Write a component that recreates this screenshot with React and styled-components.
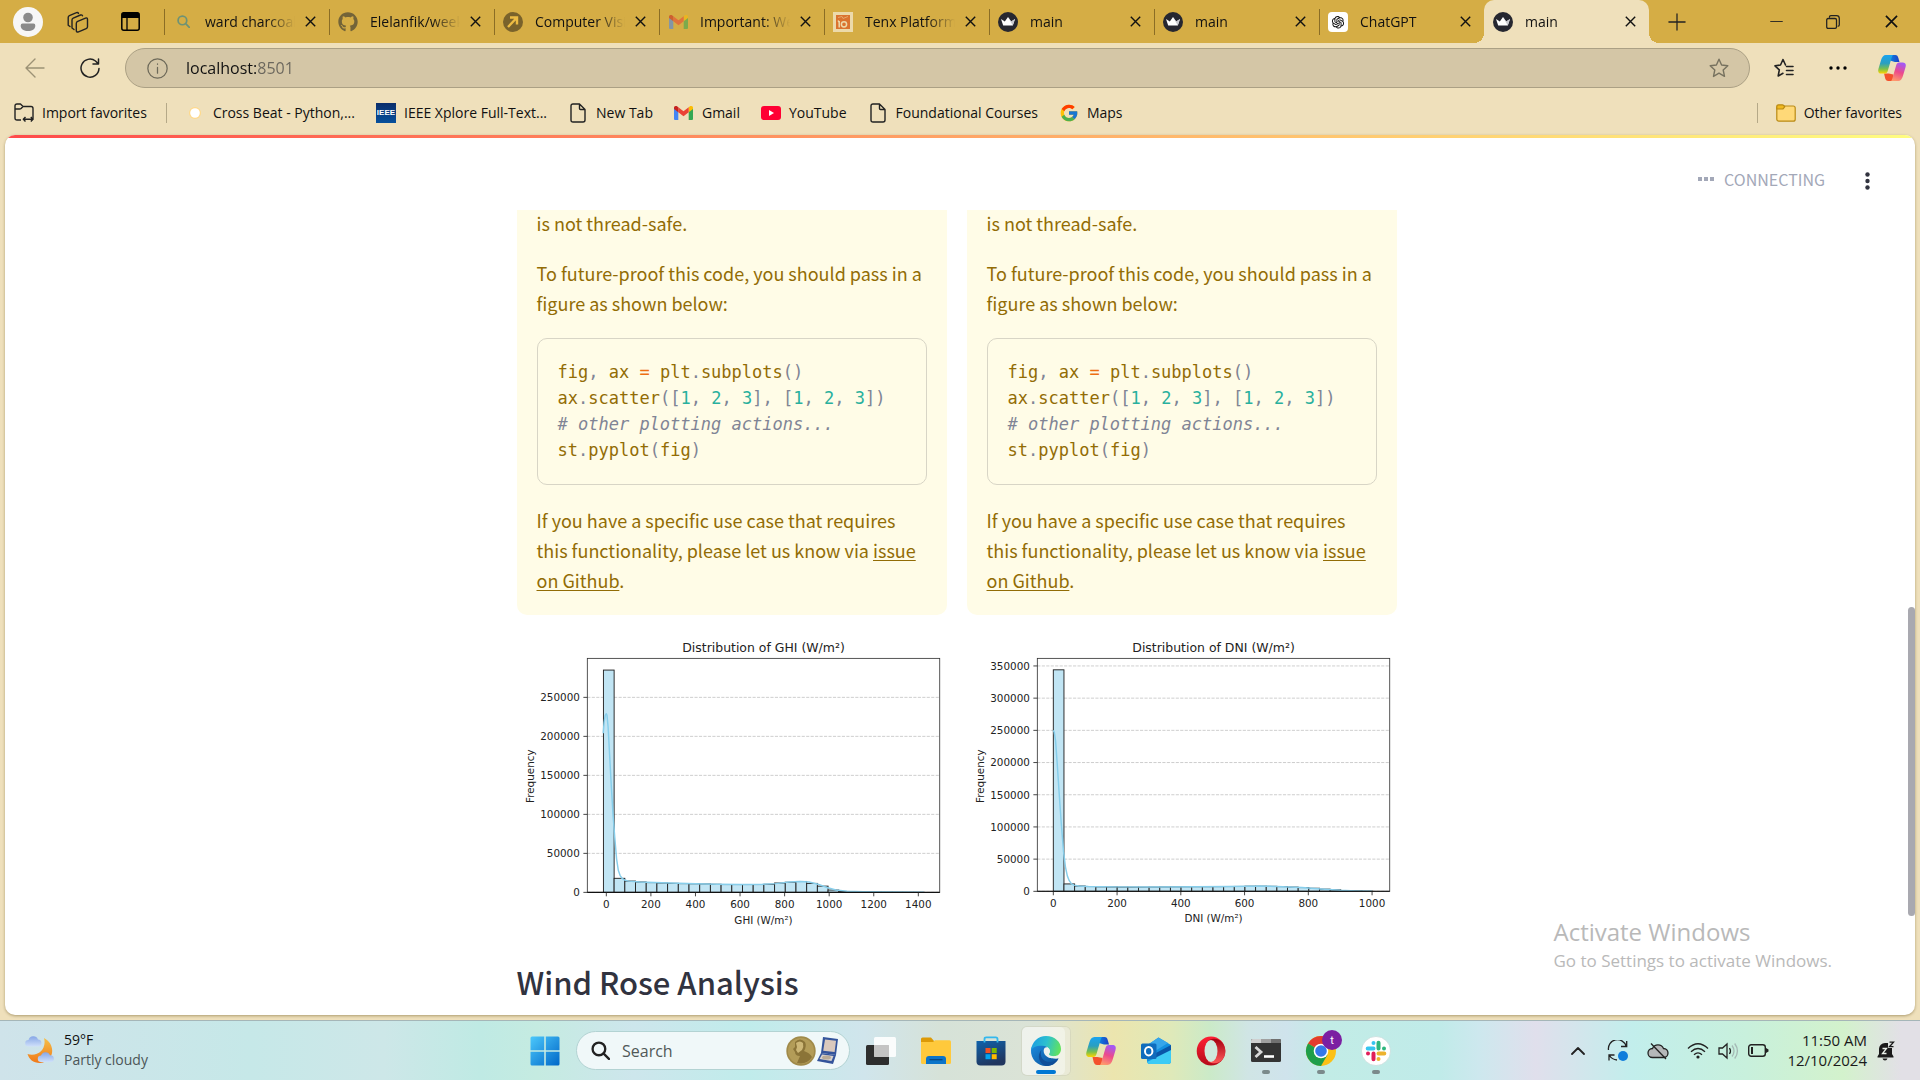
import React from "react";
import styled, { createGlobalStyle, css } from "styled-components";
import { FaGithub } from "react-icons/fa";
import { FcGoogle } from "react-icons/fc";
import { AiOutlineOpenAI } from "react-icons/ai";

const GlobalStyle = createGlobalStyle`
  *, *::before, *::after { box-sizing: border-box; }
  body { margin: 0; overflow: hidden; }
  button, input { font: inherit; color: inherit; margin: 0; padding: 0; border: 0; background: none; outline: none; }
  svg { display: block; flex: none; }
`;

const uiFont = `"Open Sans", "Noto Sans", sans-serif`;
const docFont = `"Noto Sans CJK SC", "Noto Sans", sans-serif`;

/* ---------- window shell ---------- */

const Desktop = styled.div`
  display: flex;
  flex-direction: column;
  height: 100vh;
  background: #efe0bb;
  color: #111;
  font: 14px/20px ${uiFont};
`;

const IconButton = styled.button`
  display: flex;
  align-items: center;
  justify-content: center;
  flex: none;
  width: ${(p) => p.$w || 40}px;
  height: ${(p) => p.$h || 40}px;
`;

/* ---------- tab strip ---------- */

const TabStrip = styled.div`
  display: flex;
  align-items: center;
  height: 43px;
  flex: none;
  background: #d5ad45;
`;

const StripTools = styled.div`
  display: flex;
  align-items: center;
  width: 164px;
  flex: none;
  padding-left: 2px;
`;

const Tab = styled.div`
  position: relative;
  display: flex;
  align-items: center;
  flex: 0 1 165px;
  min-width: 0;
  height: 43px;
  padding: 0 8px 0 9px;
  ${(p) =>
    p.$active
      ? css`
          background: #efe0bb;
          border-radius: 10px 10px 0 0;
          &::before,
          &::after {
            content: "";
            position: absolute;
            bottom: 0;
            width: 10px;
            height: 10px;
          }
          &::before {
            right: 100%;
            background: radial-gradient(circle at 0 0, #d5ad45 10px, #efe0bb 10px);
          }
          &::after {
            left: 100%;
            background: radial-gradient(circle at 100% 0, #d5ad45 10px, #efe0bb 10px);
          }
        `
      : css`
          &::before {
            content: "";
            position: absolute;
            left: 0;
            top: 9px;
            width: 1px;
            height: 26px;
            background: #8b6d25;
          }
        `}
`;

const TabLink = styled.button`
  display: flex;
  align-items: center;
  gap: 12px;
  flex: 1;
  min-width: 0;
  height: 32px;
  text-align: left;
`;

const TabTitle = styled.span`
  flex: 1;
  min-width: 0;
  overflow: hidden;
  white-space: nowrap;
  margin-right: 4px;
  mask-image: linear-gradient(to right, #000 calc(100% - 28px), transparent);
`;

const Favicon = styled.span`
  display: flex;
  align-items: center;
  justify-content: center;
  flex: none;
  width: 20px;
  height: 20px;
  opacity: ${(p) => (p.$asleep ? 0.55 : 1)};
`;

const GptTile = styled.span`
  display: flex;
  padding: 2px;
  border-radius: 4px;
  background: #fff;
`;

const Spacer = styled.div`
  flex: 1;
`;

/* ---------- address bar ---------- */

const Toolbar = styled.div`
  display: flex;
  align-items: center;
  height: 48px;
  flex: none;
  padding: 2px 8px 0 8px;
`;

const AddressBar = styled.label`
  display: flex;
  align-items: center;
  flex: 1;
  height: 40px;
  margin: 0 14px 0 7px;
  padding: 0 10px 0 21px;
  border: 1px solid #aba084;
  border-radius: 20px;
  background: #d4c6a6;
`;

const AddressInput = styled.input`
  flex: 1;
  min-width: 0;
  margin-left: 18px;
  font-size: 16px;
  line-height: 24px;
  color: #555;
  -webkit-text-fill-color: transparent;
  background: linear-gradient(to right, #111 70px, #6a665c 70px);
  background-clip: text;
  -webkit-background-clip: text;
`;

/* ---------- favorites bar ---------- */

const FavoritesBar = styled.nav`
  display: flex;
  align-items: center;
  gap: 21px;
  height: 44px;
  flex: none;
  padding: 0 18px 0 14px;
`;

const Favorite = styled.a`
  display: flex;
  align-items: center;
  gap: 8px;
  color: #111;
  text-decoration: none;
  white-space: nowrap;
`;

const Divider = styled.span`
  width: 1px;
  height: 20px;
  margin: 0 -3px 0 -2px;
  background: #b5a988;
`;

/* ---------- page ---------- */

const PageFrame = styled.div`
  position: relative;
  display: flex;
  flex-direction: column;
  flex: 1;
  min-height: 0;
  margin: 0 5px 5px;
  border-radius: 10px;
  overflow: hidden;
  background: #fff;
  color: #31333f;
  font-family: ${docFont};
  box-shadow: 0 1px 3px rgba(90, 70, 20, 0.45);
`;

const Decoration = styled.div`
  height: 3px;
  flex: none;
  background: linear-gradient(to right, #ff4b4b, #fffd80);
`;

const PageHeader = styled.header`
  display: flex;
  align-items: center;
  justify-content: flex-end;
  height: 72px;
  flex: none;
  padding: 13px 28px 0 0;
`;

const Status = styled.span`
  display: flex;
  align-items: center;
  gap: 10px;
  margin-right: 22px;
  padding-bottom: 4px;
  color: #a3a8b8;
  font-size: 16px;
  line-height: 24px;
`;

const Main = styled.main`
  flex: 1;
  min-height: 0;
  padding-right: 7px;
  overflow: hidden;
`;

const Block = styled.div`
  width: 880px;
  max-width: 100%;
  margin: 0 auto;
`;

const Columns = styled.div`
  display: grid;
  grid-template-columns: 1fr 1fr;
  gap: 20px;
`;

const Column = styled.section`
  display: flex;
  flex-direction: column;
  gap: 20px;
  min-width: 0;
`;

const Alert = styled.div`
  display: flex;
  flex-direction: column;
  gap: 20px;
  margin-top: -2px;
  padding: 0 20px 20px;
  border-radius: 0 0 10px 10px;
  background: #fffce7;
  color: #926c05;
  font-size: 18px;
  line-height: 30px;
`;

const Paragraph = styled.p`
  margin: 0;
  a {
    color: inherit;
    text-underline-offset: 2px;
  }
`;

const CodeBlock = styled.pre`
  margin: 0;
  padding: 20px;
  height: 147px;
  border: 1px solid #d8d5c6;
  border-radius: 10px;
  font: 17px/26px "DejaVu Sans Mono", "Liberation Mono", monospace;
`;

const Token = styled.span`
  color: ${(p) => ({ op: "#ed6f13", num: "#29b09d", mark: "#808495", note: "#808495" })[p.$kind]};
  font-style: ${(p) => (p.$kind === "note" ? "italic" : "normal")};
`;

const Heading = styled.h2`
  margin: 31px 0 0;
  font-size: 31px;
  line-height: 42px;
  font-weight: 500;
`;

const ScrollThumb = styled.div`
  position: absolute;
  right: 0;
  top: 472px;
  width: 7px;
  height: 309px;
  border-radius: 4px;
  background: #a9a9b0;
`;

const Watermark = styled.div`
  position: absolute;
  right: 83px;
  bottom: 41px;
  color: #b9b9b9;
  font-family: ${uiFont};
  font-weight: 400;
`;

const WatermarkTitle = styled.div`
  font-size: 24px;
  line-height: 32px;
`;

const WatermarkText = styled.div`
  font-size: 17px;
  line-height: 26px;
`;

/* ---------- taskbar ---------- */

const TaskBar = styled.footer`
  display: grid;
  grid-template-columns: 1fr auto 1fr;
  align-items: center;
  height: 60px;
  flex: none;
  border-top: 1px solid #a5b6b8;
  background: linear-gradient(
    to right, #cfe3ea 0%, #c6e8e8 13%, #cde7e8 20%, #bfeae4 25%, #c5ebe1 28%, #cde6ec 33%, #c0eceb 39%,
    #d0e5ec 45%, #d6e2d8 49%, #dbe3d6 54%, #ece5ae 58%, #dfe9b9 61%, #cbeac8 63%, #d0e5e5 65%,
    #cfe3ec 67%, #c2ece6 69%, #c0ebe9 75%, #cde8ee 77%, #e0dfec 80%, #c2eeec 85%, #c8f0dc 91%,
    #d3f2cc 96%, #e2e0e6 99%
  );
`;

const Weather = styled.button`
  display: flex;
  align-items: center;
  gap: 9px;
  justify-self: start;
  padding: 0 0 2px 25px;
  text-align: left;
`;

const Muted = styled.div`
  color: #4c5658;
`;

const Apps = styled.div`
  display: flex;
  align-items: center;
`;

const AppButton = styled.button`
  position: relative;
  display: flex;
  align-items: center;
  justify-content: center;
  width: 55px;
  height: 58px;
  &::before {
    content: "";
    position: absolute;
    inset: 5px 3px 5px 4px;
    border-radius: 5px;
    background: ${(p) => (p.$active ? "rgba(255,255,255,.55)" : "none")};
    box-shadow: ${(p) => (p.$active ? "0 0 0 1px rgba(200,200,180,.4), inset -5px 0 0 rgba(225,225,200,.5)" : "none")};
  }
  &::after {
    content: "";
    position: absolute;
    bottom: 6px;
    width: ${(p) => (p.$active ? 20 : 8)}px;
    height: 4px;
    border-radius: 2px;
    background: ${(p) => (p.$active ? "#0078d4" : p.$running ? "#7b8a8b" : "none")};
  }
  svg {
    position: relative;
    overflow: visible;
  }
`;

const SearchBox = styled.label`
  display: flex;
  align-items: center;
  width: 274px;
  height: 39px;
  margin: 0 3px 0 4px;
  padding: 0 11px 0 14px;
  border: 1px solid #b3d3d3;
  border-radius: 20px;
  background: #f0f8f9;
  input {
    flex: 1;
    min-width: 0;
    margin-left: 12px;
    font-size: 16px;
    line-height: 24px;
  }
  input::placeholder {
    color: #505858;
    opacity: 1;
  }
`;

const Tray = styled.div`
  display: flex;
  align-items: center;
  justify-self: end;
  padding-right: 25px;
`;

const Clock = styled.button`
  margin: 0 10px 0 3px;
  padding-bottom: 2px;
  width: 86px;
  text-align: right;
  white-space: nowrap;
  color: #1a1a1a;
  font-size: 15px;
`;

/* ---------- icons ---------- */

const Close = ({ size = 11 }) => (
  <svg width={size} height={size} viewBox="0 0 11 11" stroke="#111" strokeWidth="1.4">
    <path d="M.8.8l9.4 9.4M10.2.8L.8 10.2" />
  </svg>
);

const Avatar = () => (
  <svg width="30" height="30" viewBox="0 0 30 30">
    <circle cx="15" cy="15" r="15" fill="#f7f7f7" />
    <circle cx="15" cy="10.500" r="4.800" fill="#8b8b8b" />
    <path d="M9.500 16.500h11q1.800 0 1.800 2.200c0 3.600-3.300 5.300-7.300 5.300s-7.300-1.700-7.300-5.300q0-2.200 1.800-2.200z" fill="#8b8b8b" />
  </svg>
);

const Workspaces = () => (
  <svg width="22" height="22" viewBox="0 0 22 22" fill="none" stroke="#222" strokeWidth="1.4" strokeLinejoin="round" strokeLinecap="round">
    <path d="M3 15.500L1.200 14.200V6.500q0-1.300 1.200-1.800L9.500 1.600q1.400-.5 2 .8" />
    <path d="M7 18.500l-2-1.500V9q0-1.300 1.200-1.800L13.500 4q1.400-.5 2 .8" />
    <path d="M9.300 12.500q0-1.600 1.400-2.200l7.800-3.200q2-.7 2 1.400v7.300q0 1.400-1.300 1.900l-7.700 3.200q-2.200.7-2.200-1.500z" />
  </svg>
);

const TabActions = () => (
  <svg width="19" height="19" viewBox="0 0 19 19">
    <rect x=".8" y=".8" width="17.400" height="17.400" rx="2" fill="none" stroke="#000" strokeWidth="1.500" />
    <path d="M1 2q0-1.500 1.500-1.500h14q1.500 0 1.500 1.500v4H1z" />
    <path d="M6 6v12" stroke="#000" strokeWidth="1.300" />
  </svg>
);

const Crown = () => (
  <svg width="20" height="20" viewBox="0 0 20 20">
    <circle cx="10" cy="10" r="10" fill="#262730" />
    <path d="M3 7l3.800 2.500L10 5l3.200 4.500L17 7l-2.200 6.500H5.200z" fill="#fff" />
    <path d="M10 5l3.200 4.500L17 7l-2.200 6.500z" fill="#c9cad0" />
  </svg>
);

const Magnifier = ({ size, color, width }) => (
  <svg width={size} height={size} viewBox="0 0 18 18" fill="none" stroke={color} strokeWidth={width}>
    <circle cx="7.500" cy="7.500" r="6" />
    <path d="M12 12l5 5" strokeLinecap="round" />
  </svg>
);

const ArrowBadge = () => (
  <svg width="20" height="20" viewBox="0 0 20 20">
    <circle cx="10" cy="10" r="10" fill="#2f2616" />
    <path d="M5 15l8.500-9M7 5.500h7v7" fill="none" stroke="#ffc843" strokeWidth="2.400" />
  </svg>
);

const GmailMark = () => (
  <svg width="19" height="14" viewBox="0 0 19 14">
    <path d="M0 2.200V13q0 1 1 1h3.300V5.500z" fill="#4285f4" />
    <path d="M19 2.200V13q0 1-1 1h-3.300V5.500z" fill="#34a853" />
    <path d="M14.700 1.200v5L19 3V1.700C19 .2 17.200-.5 16 .3z" fill="#fbbc04" />
    <path d="M4.300 6.300V1.200l5.200 4 5.200-4v5.100l-5.200 4z" fill="#ea4335" />
    <path d="M0 1.700V3l4.300 3.200v-5L3 .3C1.800-.5 0 .2 0 1.700z" fill="#c5221f" />
  </svg>
);

const TenMark = () => (
  <svg width="20" height="20" viewBox="0 0 20 20">
    <path d="M0 0h20v20H0z" fill="#fff" />
    <path d="M3 3h14v14H3z" fill="#e1441e" />
    <path d="M6.200 9v6.500M4.800 9.500l1.400-.7" stroke="#fff" strokeWidth="1.500" />
    <circle cx="11" cy="12.300" r="2.600" fill="none" stroke="#fff" strokeWidth="1.500" />
    <path d="M5 5.500l4-1 1 2 5-2" stroke="#f2a58f" fill="none" />
  </svg>
);

const Stroke = ({ w = 20, h = 20, box = "0 0 20 20", color = "#222", sw = 1.4, d }) => (
  <svg width={w} height={h} viewBox={box} fill="none" stroke={color} strokeWidth={sw} strokeLinecap="round" strokeLinejoin="round">
    <path d={d} />
  </svg>
);

const starPath = "M10 1.200l2.600 5.800 6.200.7-4.600 4.300 1.300 6.400L10 15.200l-5.500 3.200 1.300-6.400L1.200 7.700l6.200-.7z";

const PageIcon = () => <Stroke w={16} h={20} box="0 0 16 20" d="M3 1h6.500L15 6.500V17q0 2-2 2H3q-2 0-2-2V3q0-2 2-2zM9.500 1v4.500q0 1 1 1H15" />;

const YouTube = () => (
  <svg width="20" height="14" viewBox="0 0 20 14">
    <rect width="20" height="14" rx="3" fill="#ff0033" />
    <path d="M8 4l5 3-5 3z" fill="#fff" />
  </svg>
);

const Folder = () => (
  <svg width="20" height="18" viewBox="0 0 20 18" stroke="#b98a14" strokeWidth="1.200">
    <rect x=".8" y="2" width="18.400" height="15.200" rx="2" fill="#ffd978" />
    <path d="M.8 5V2.500Q.8.800 2.500.8h4q1 0 2.300 2L7 5z" fill="#f0b91e" />
  </svg>
);

const ImportIcon = () => (
  <svg width="20" height="20" viewBox="0 0 20 20" fill="none" stroke="#222" strokeWidth="1.400" strokeLinejoin="round">
    <path d="M7 17H3q-2 0-2-2V3q0-2 2-2h3.500L9 3.500h8q2 0 2 2V15q0 1-.8 1.500M1 6h4.500q1 0 1.600-.6L9 3.500" />
    <path d="M11.500 14L9.300 16.300l2.200 2.300M16.800 14l2.200 2.300-2.200 2.300M10 16.300h8.500" />
  </svg>
);

const Ieee = styled.span`
  width: 20px;
  height: 20px;
  background: linear-gradient(#0a2d6b, #07509c);
  color: #fff;
  font: bold 8px/20px "Liberation Sans", sans-serif;
  text-align: center;
`;

const SunDot = () => (
  <svg width="20" height="20" viewBox="0 0 20 20">
    <circle cx="10" cy="10" r="6" fill="#ffd98a" />
    <circle cx="10" cy="10" r="4.800" fill="#fff" />
  </svg>
);

const Copilot = ({ size = 30, id }) => (
  <svg width={size} height={size} viewBox="0 0 30 28">
    <defs>
      <linearGradient id={`${id}a`} x1="0" y1="0" x2="0" y2="1">
        <stop offset="0" stopColor="#1aa3f0" />
        <stop offset=".45" stopColor="#2a9fc0" />
        <stop offset=".75" stopColor="#7cc04a" />
        <stop offset="1" stopColor="#ffd400" />
      </linearGradient>
      <linearGradient id={`${id}b`} x1=".6" y1="0" x2=".3" y2="1">
        <stop offset="0" stopColor="#a259f7" />
        <stop offset=".5" stopColor="#ec4a8b" />
        <stop offset="1" stopColor="#ff9a6b" />
      </linearGradient>
      <linearGradient id={`${id}c`} x1="0" y1="0" x2="1" y2="0">
        <stop offset="0" stopColor="#0d80e0" />
        <stop offset="1" stopColor="#1f3fc4" />
      </linearGradient>
    </defs>
    <path d="M13 0h5.500c2 0 2.700 1.200 3.300 3.200L23 7.500h-5L13 6z" fill={`url(#${id}c)`} />
    <path d="M17 28h-6c-2 0-2.800-1.200-3.400-3.200L6.500 20h5l5 1z" fill="#f4512c" />
    <path d="M16 0H8.500C5.800 0 4.300 2.200 3.300 5.500L.6 14.500C-.6 18.500 1 20 3.500 20h3.700c1.800 0 2.700-1 3.300-3L14 5c.7-2.600 1.300-4.200 2-5z" fill={`url(#${id}a)`} />
    <path d="M14 28h7.500c2.700 0 4.200-2.200 5.200-5.500l2.700-9c1.200-4-.4-5.500-2.900-5.500h-3.700c-1.800 0-2.700 1-3.300 3L16 23c-.7 2.600-1.300 4.200-2 5z" fill={`url(#${id}b)`} />
  </svg>
);

const WeatherIcon = () => (
  <svg width="30" height="30" viewBox="0 0 30 30">
    <defs>
      <linearGradient id="moon" x1="0" y1="0" x2="0" y2="1">
        <stop offset="0" stopColor="#f5c04a" />
        <stop offset="1" stopColor="#f07818" />
      </linearGradient>
      <linearGradient id="cloud" x1="0" y1="0" x2="0" y2="1">
        <stop offset="0" stopColor="#86a6e6" />
        <stop offset="1" stopColor="#cfe0fa" />
      </linearGradient>
    </defs>
    <path d="M19 3c12 6 11 24-4 25C8 28 4 24 2.500 19 13 22 22 14 19 3z" fill="url(#moon)" />
    <path d="M3.500 11.500a3.300 3.300 0 010-6.600A5 5 0 0113 4.500a3.600 3.600 0 011 7z" fill="url(#cloud)" />
    <path d="M16 27a3.200 3.200 0 010-6.400 4.800 4.800 0 019-.4 3.500 3.500 0 011.500 6.800z" fill="url(#cloud)" />
  </svg>
);

const StartIcon = () => (
  <svg width="30" height="30" viewBox="0 0 30 30">
    <defs>
      <linearGradient id="win" x1="0" y1="0" x2="1" y2="1">
        <stop offset="0" stopColor="#4cc8fb" />
        <stop offset="1" stopColor="#0067c8" />
      </linearGradient>
    </defs>
    <path d="M2 .5h12.200v13.700H.5V2Q.5.500 2 .5zM15.800.5H28q1.500 0 1.500 1.500v12.200H15.800zM.5 15.800h13.700v13.700H2q-1.500 0-1.500-1.500zM15.800 15.800h13.700V28q0 1.500-1.500 1.500H15.800z" fill="url(#win)" />
  </svg>
);

const Medal = () => (
  <svg width="52" height="30" viewBox="0 0 52 30">
    <circle cx="15" cy="15" r="14.700" fill="#a08a4a" />
    <circle cx="15" cy="15" r="13" fill="#b39c58" />
    <path d="M9 6q5-5 10 0 2 4-1 9 6 2 8 6-5 8-15 6l3-7q-5 0-5-4l-2-3 2-2z" fill="#8b7438" />
    <path d="M10 7q4-3 7 0 1 4-1 7l-4 3-2-3 1-3z" fill="#cdb777" />
    <path d="M37 1l15 2-2 16-15-2z" fill="#34549b" />
    <path d="M39 3.500l11 1.300-1.400 11.200-11.400-1.300z" fill="#dac9bd" />
    <path d="M35 17l15 2-3 9-16-3z" fill="#34549b" />
    <path d="M36 18.500l11.500 1.500-2 5-12-2z" fill="#d9d3ce" />
    <ellipse cx="40.500" cy="21.500" rx="4.500" ry="2" fill="#b9ab98" />
  </svg>
);

const TaskView = () => (
  <svg width="30" height="28" viewBox="0 0 30 28">
    <rect y="8" width="23" height="20" rx="1.500" fill="#2e2e2e" />
    <rect x="8" y="0" width="22" height="20" rx="1.500" fill="#fff" opacity=".88" />
    <path d="M8 8h15v12H8z" fill="#bcbcbc" opacity=".8" />
  </svg>
);

const Explorer = () => (
  <svg width="30" height="27" viewBox="0 0 30 27">
    <path d="M0 2Q0 .5 1.500.5h8.500l3 3.500H28v5H0z" fill="#dd9a07" />
    <path d="M0 5h12l2-1.700h14.500Q30 3.300 30 5v20.500q0 1.500-1.500 1.500h-27Q0 27 0 25.500z" fill="#ffc93c" />
    <path d="M5 27v-5q0-3 3-3h14q3 0 3 3v5z" fill="#0b74c9" />
    <path d="M8.500 22.700h13" stroke="#07437c" strokeWidth="1.200" />
  </svg>
);

const Store = () => (
  <svg width="30" height="30" viewBox="0 0 30 30">
    <defs>
      <linearGradient id="store" x1="0" y1="0" x2=".4" y2="1">
        <stop offset="0" stopColor="#0f62ab" />
        <stop offset="1" stopColor="#20365f" />
      </linearGradient>
    </defs>
    <path d="M.5 5h29v20.500q0 4-4 4h-21q-4 0-4-4z" fill="url(#store)" />
    <path d="M8.500 6.500V3q0-1.700 1.700-1.700h9.600q1.700 0 1.700 1.700v3.500" fill="none" stroke="#33b8ee" strokeWidth="1.800" />
    <path d="M9.500 12h5v5h-5z" fill="#f25022" />
    <path d="M15.700 12h5v5h-5z" fill="#7fba00" />
    <path d="M9.500 18.200h5v5h-5z" fill="#00a4ef" />
    <path d="M15.700 18.200h5v5h-5z" fill="#ffb900" />
  </svg>
);

const Edge = () => (
  <svg width="30" height="30" viewBox="0 0 30 30">
    <defs>
      <linearGradient id="edgeTop" x1="0" y1=".3" x2="1" y2=".5">
        <stop offset="0" stopColor="#1b9de2" />
        <stop offset=".5" stopColor="#2cc0cf" />
        <stop offset="1" stopColor="#62e35c" />
      </linearGradient>
      <linearGradient id="edgeLow" x1="0" y1="0" x2="1" y2="1">
        <stop offset="0" stopColor="#1b8de0" />
        <stop offset="1" stopColor="#0c4c94" />
      </linearGradient>
    </defs>
    <path d="M0 14C1 7 8 7 14 9c3 2 3 4 1.500 5.500C13 19 19 23.500 27.500 22.500 25 27.500 20.500 30 15 30 6.500 30-.5 23 0 14z" fill="url(#edgeLow)" />
    <path d="M10.500 14c-2.500 6 1.500 12 8 12 4 0 7-1.500 9-3.500C25 27.500 20.500 30 15 30 8 28 5.500 19 10.500 14z" fill="#0f4e98" />
    <path d="M0 14C1 6 7 0 15 0c9 0 15 6 15 13 0 5-4 7.500-8 7.500-3 0-5-1.200-4-2.500 1.800-2.200.5-7-4.500-8C7 8.800 1.500 11 0 14z" fill="url(#edgeTop)" />
    <path d="M13.500 12c2.500-2 5.500.500 5.500 3 0 2-1.500 2.500-1 3.500 1 1.800 5 2 8 1.200-1.500 1.800-4.500 2.800-7 2.300-4.500-1-8-6-5.500-10z" fill="#eef3ee" />
  </svg>
);

const Outlook = () => (
  <svg width="30" height="27" viewBox="0 0 30 27">
    <path d="M5 9l12.500-8.500L30 8v16q0 3-3 3H9q-3 0-3-3z" fill="#1490df" />
    <path d="M8 7l9.500-6.500L27 6 14 14z" fill="#37a6ea" />
    <path d="M30 8v6l-13 9-4-6z" fill="#0a56a8" />
    <path d="M30 13v11q0 3-3 3H9q-2 0-3-2z" fill="#3dcbf5" />
    <rect y="6.500" width="15.500" height="15.500" rx="1.500" fill="#0f6cbd" />
    <ellipse cx="7.700" cy="14.200" rx="3.700" ry="4.200" fill="none" stroke="#fff" strokeWidth="2" />
  </svg>
);

const Opera = () => (
  <svg width="30" height="30" viewBox="0 0 30 30">
    <defs>
      <linearGradient id="opera" x1="0" y1="0" x2="0" y2="1">
        <stop offset="0" stopColor="#ff2035" />
        <stop offset="1" stopColor="#b50a1a" />
      </linearGradient>
      <linearGradient id="operaIn" x1="0" y1="0" x2="0" y2="1">
        <stop offset="0" stopColor="#a5000f" />
        <stop offset="1" stopColor="#ff5a5a" />
      </linearGradient>
    </defs>
    <ellipse cx="15" cy="15" rx="14.300" ry="14.500" fill="url(#opera)" />
    <path d="M12 4.500C22-1 29 7 29.300 15S22 31 12 25.500z" fill="url(#operaIn)" />
    <ellipse cx="15" cy="15" rx="6.500" ry="11" fill="#cfe9dc" />
  </svg>
);

const Terminal = () => (
  <svg width="30" height="23" viewBox="0 0 30 23">
    <rect width="30" height="23" rx="1.500" fill="#343434" />
    <path d="M0 1.500Q0 0 1.500 0H10v4H0z" fill="#d0d0d0" />
    <path d="M10 0h10v4H10z" fill="#a0a0a0" />
    <path d="M20 0h8.500Q30 0 30 1.500V4H20z" fill="#707070" />
    <path d="M4.500 8l5.500 5-5.500 5" fill="none" stroke="#d8d8d8" strokeWidth="2.800" />
    <path d="M13 17.500h10" stroke="#fff" strokeWidth="2.600" />
  </svg>
);

const Chrome = () => (
  <svg width="30" height="42" viewBox="0 0 30 42">
    <g transform="translate(0 6)">
      <circle cx="15" cy="15" r="15" fill="#fbc116" />
      <path d="M15 15L2 7.500a15 15 0 0126 0z" fill="#e33b2e" />
      <path d="M15 15L2 7.500A15 15 0 0015 30l6.500-11.200z" fill="#1e9e4a" />
      <circle cx="15" cy="15" r="7.300" fill="#fff" />
      <circle cx="15" cy="15" r="5.800" fill="#3478ea" />
    </g>
    <circle cx="26" cy="10" r="10" fill="#7b1fa2" />
    <text x="26" y="14" fontFamily="Roboto, sans-serif" fontSize="11" fill="#fff" textAnchor="middle">t</text>
  </svg>
);

const Slack = () => (
  <svg width="30" height="30" viewBox="0 0 30 30">
    <circle cx="15" cy="15" r="14.500" fill="#fff" stroke="#c3d5d5" strokeWidth=".6" />
    <g strokeWidth="4" strokeLinecap="round">
      <path d="M12.500 7v0M6.700 12.500h5.800" stroke="#36c5f0" />
      <path d="M17.500 6.700v5.800M23 12.500v0" stroke="#2eb67d" />
      <path d="M17.500 17.500h5.800M17.500 23v0" stroke="#ecb22e" />
      <path d="M12.500 17.500v5.800M7 17.500v0" stroke="#e01e5a" />
    </g>
  </svg>
);

const Sync = () => (
  <svg width="22" height="22" viewBox="0 0 22 22" fill="none" stroke="#222" strokeWidth="1.300">
    <path d="M1.500 10A9 9 0 0119 6M19.700 1v5.500H14M2 20.500V15h5.500M2.500 15.500Q5 19.500 10 20" />
    <circle cx="16" cy="16" r="5" fill="#0f7ddb" stroke="none" />
  </svg>
);

const CloudOff = () => (
  <svg width="22" height="18" viewBox="0 0 22 18" stroke="#222" strokeWidth="1.300">
    <path d="M5.500 15.500a4.500 4.500 0 010-9 6 6 0 0111 0 4.500 4.500 0 010 9z" fill="#b5b8b9" />
    <path d="M4 1.500l15 15.500" />
  </svg>
);

const Wifi = () => (
  <svg width="22" height="17" viewBox="0 0 22 17" fill="none" stroke="#222" strokeWidth="1.300">
    <path d="M1 6.500q10-9.500 20 0M4 9.800q7-6.500 14 0M7 12.700q4-3.600 8 0" />
    <circle cx="11" cy="15" r="1.600" fill="#222" stroke="none" />
  </svg>
);

const Volume = () => (
  <svg width="21" height="18" viewBox="0 0 21 18" fill="none" stroke="#222" strokeWidth="1.300">
    <path d="M1 6h3.500L9 2v14l-4.500-4H1zM11.500 6q2 3 0 6" />
    <path d="M14 3.500q4 5.500 0 11M16.700 1.500q5.500 7.500 0 15" stroke="#a5b9b5" />
  </svg>
);

const Battery = () => (
  <svg width="21" height="13" viewBox="0 0 21 13">
    <rect x=".7" y=".7" width="16.600" height="11.600" rx="2.500" fill="none" stroke="#222" strokeWidth="1.400" />
    <path d="M3 3h2v7H3zM18 4l2.500 1.500v2L18 9z" fill="#222" />
  </svg>
);

const Bell = () => (
  <svg width="18" height="20" viewBox="0 0 18 20">
    <path d="M2 13V8a6 6 0 016-6h3v5h4v6l1.500 2.500v1H.5v-1zM5.500 17.500h5q-.5 2-2.500 2t-2.500-2z" fill="#1a1a1a" />
    <path d="M5.500 7.500h4l-4 5h4M12.500 1.200h4l-4 4.500h4" fill="none" stroke="#e9efe8" strokeWidth="1.300" />
    <path d="M12.500 1.200h4l-4 4.500h4" fill="none" stroke="#1a1a1a" strokeWidth="1.300" />
  </svg>
);

/* ---------- histogram ---------- */

const ChartSvg = styled.svg`
  width: 100%;
  height: auto;
  font-family: "DejaVu Sans", sans-serif;
  fill: #222;
`;

function Histogram({ name, x0, xStep, xTicks, y0, yStep, yTicks, start, bin, counts, curve }) {
  const X = (v) => x0 + v * xStep;
  const Y = (v) => y0 - v * yStep;
  const left = 67.7;
  const right = 407;
  const top = 22.5;
  const line = curve.map(([x, y], i) => `${i ? "L" : "M"}${X(x).toFixed(2)} ${Y(y).toFixed(2)}`).join("");
  return (
    <ChartSvg viewBox="0 0 414 284" role="img">
      <g stroke="#b0b0b0" strokeOpacity=".75" strokeWidth=".8" strokeDasharray="3 1.300">
        {yTicks.map((t) => (
          <path key={t} d={`M${left} ${Y(t)}H${right}`} />
        ))}
      </g>
      <g fill="#c1e5f4" stroke="#222" strokeWidth=".9">
        {counts.map((c, i) => (
          <rect key={i} x={X(start + i * bin)} y={Y(c)} width={bin * xStep} height={c * yStep} />
        ))}
      </g>
      <path d={line} fill="none" stroke="#87ceeb" strokeWidth="1.400" strokeLinejoin="round" />
      <rect x={left} y={top} width={right - left} height={y0 - top} fill="none" stroke="#333" strokeWidth=".8" />
      <path d={`M${left} ${y0}H${right}`} stroke="#111" />
      <g stroke="#222" strokeWidth=".8">
        {yTicks.map((t) => (
          <path key={t} d={`M${left - 3.8} ${Y(t)}h3.800`} />
        ))}
        {xTicks.map((t) => (
          <path key={t} d={`M${X(t)} ${y0}v3.800`} />
        ))}
      </g>
      <g fontSize="10">
        {yTicks.map((t) => (
          <text key={t} x="60.500" y={Y(t) + 3.8} textAnchor="end">{t}</text>
        ))}
        {xTicks.map((t) => (
          <text key={t} x={X(t)} y={y0 + 15} textAnchor="middle">{t}</text>
        ))}
        <text x={(left + right) / 2} y={y0 + 30} textAnchor="middle">{name} (W/m²)</text>
        <text transform="translate(16.500 136) rotate(-90)" textAnchor="middle">Frequency</text>
      </g>
      <text x={(left + right) / 2} y="16.500" fontSize="12" textAnchor="middle">Distribution of {name} (W/m²)</text>
    </ChartSvg>
  );
}

const range = (end, step) => Array.from({ length: end / step + 1 }, (_, i) => i * step);

const ghi = {
  name: "GHI", x0: 86, xStep: 0.21457, xTicks: range(1400, 200),
  y0: 247.8, yStep: 0.000751, yTicks: range(250000, 50000), start: -13, bin: 48,
  counts: [285000, 18000, 14500, 13300, 12500, 12000, 11600, 11200, 11000, 10800, 10400, 10000, 10000, 10000, 10000, 10400, 12000, 13000, 14000, 11500, 8000, 3000, 1200, 600, 300, 200, 100, 80, 50, 30],
  curve: [[-14, 204000], [-10, 218000], [-5, 227000], [0, 229000], [3, 227000], [8, 212000], [15, 175000], [22, 138000], [30, 100000], [38, 70000], [46, 43000], [54, 28000], [62, 21500], [72, 17500], [85, 15500], [100, 14400], [150, 13400], [250, 12300], [400, 11100], [500, 10300], [600, 10100], [700, 10300], [760, 11200], [820, 13200], [870, 14000], [910, 13200], [950, 10500], [990, 6200], [1030, 3000], [1080, 1500], [1150, 900], [1300, 500], [1425, 300]],
};

const dni = {
  name: "DNI", x0: 83.1, xStep: 0.3069, xTicks: range(1000, 200),
  y0: 246.8, yStep: 0.00062, yTicks: range(350000, 50000), start: 0, bin: 33.4,
  counts: [344000, 11500, 8300, 7400, 7000, 6800, 6600, 6500, 6500, 6600, 6800, 7000, 7100, 7200, 7200, 7300, 7400, 7600, 8000, 8000, 7800, 7300, 6600, 5800, 4800, 3400, 2300, 1000, 500, 200],
  curve: [[0, 250000], [3, 247000], [7, 234000], [12, 200000], [18, 155000], [25, 105000], [32, 62000], [38, 38000], [44, 24000], [50, 16500], [57, 11500], [65, 9600], [80, 8400], [110, 7500], [200, 6900], [300, 6700], [450, 7100], [550, 7600], [650, 8300], [700, 7600], [780, 6000], [840, 3700], [900, 1600], [950, 700], [1000, 300]],
};

/* ---------- content parts ---------- */

const M = ({ children }) => <Token $kind="mark">{children}</Token>;
const N = ({ children }) => <Token $kind="num">{children}</Token>;
const Triple = () => (
  <>
    <M>[</M><N>1</N><M>,</M> <N>2</N><M>,</M> <N>3</N><M>]</M>
  </>
);

const Code = styled.code`
  font: inherit;
`;

function PyplotWarning() {
  return (
    <Alert role="alert">
      <Paragraph>is not thread-safe.</Paragraph>
      <Paragraph>To future-proof this code, you should pass in a figure as shown below:</Paragraph>
      <CodeBlock>
        <Code>
          fig<M>,</M> ax <Token $kind="op">=</Token> plt<M>.</M>subplots<M>()</M>{"\n"}
          ax<M>.</M>scatter<M>(</M><Triple /><M>,</M> <Triple /><M>)</M>{"\n"}
          <Token $kind="note"># other plotting actions...</Token>{"\n"}
          st<M>.</M>pyplot<M>(</M>fig<M>)</M>
        </Code>
      </CodeBlock>
      <Paragraph>
        If you have a specific use case that requires this functionality, please let us know via <a href="#issue">issue on Github</a>.
      </Paragraph>
    </Alert>
  );
}

const tabs = [
  { title: "ward charcoal", asleep: true, icon: <Magnifier size={13} color="#1a7d9c" width={2.4} /> },
  { title: "Elelanfik/week", asleep: true, icon: <FaGithub size={20} color="#24292f" /> },
  { title: "Computer Vision", asleep: true, icon: <ArrowBadge /> },
  { title: "Important: Week", asleep: true, icon: <GmailMark /> },
  { title: "Tenx Platform", asleep: true, icon: <TenMark /> },
  { title: "main", icon: <Crown /> },
  { title: "main", icon: <Crown /> },
  { title: "ChatGPT", icon: <GptTile><AiOutlineOpenAI size={16} color="#111" /></GptTile> },
  { title: "main", icon: <Crown />, active: true },
];

const favorites = [
  { label: "Cross Beat - Python,...", icon: <SunDot /> },
  { label: "IEEE Xplore Full-Text...", icon: <Ieee>IEEE</Ieee> },
  { label: "New Tab", icon: <PageIcon /> },
  { label: "Gmail", icon: <GmailMark /> },
  { label: "YouTube", icon: <YouTube /> },
  { label: "Foundational Courses", icon: <PageIcon /> },
  { label: "Maps", icon: <FcGoogle size={20} /> },
];

const apps = [
  { name: "Task view", icon: <TaskView /> },
  { name: "File Explorer", icon: <Explorer /> },
  { name: "Store", icon: <Store /> },
  { name: "Edge", icon: <Edge />, active: true },
  { name: "Copilot", icon: <Copilot id="dock" /> },
  { name: "Outlook", icon: <Outlook /> },
  { name: "Opera", icon: <Opera /> },
  { name: "Terminal", icon: <Terminal />, running: true },
  { name: "Chrome", icon: <Chrome />, running: true },
  { name: "Slack", icon: <Slack />, running: true },
];

export default function App() {
  return (
    <Desktop>
      <GlobalStyle />
      <TabStrip>
        <StripTools>
          <IconButton $w={52} aria-label="Profile"><Avatar /></IconButton>
          <IconButton $w={48} aria-label="Workspaces"><Workspaces /></IconButton>
          <IconButton $w={56} aria-label="Tab actions"><TabActions /></IconButton>
        </StripTools>
        {tabs.map((t, i) => (
          <Tab key={i} $active={t.active}>
            <TabLink>
              <Favicon $asleep={t.asleep}>{t.icon}</Favicon>
              <TabTitle>{t.title}</TabTitle>
            </TabLink>
            <IconButton $w={22} $h={22} aria-label="Close tab"><Close /></IconButton>
          </Tab>
        ))}
        <IconButton $w={56} aria-label="New tab"><Stroke w={18} h={18} d="M10 1v18M1 10h18" /></IconButton>
        <Spacer />
        <IconButton $w={56} aria-label="Minimize"><Stroke w={13} h={13} d="M1 10h18" /></IconButton>
        <IconButton $w={58} aria-label="Restore">
          <Stroke w={14} h={14} sw={1.8} d="M4 5h9q2 0 2 2v10q0 2-2 2H3q-2 0-2-2V7q0-2 2-2zM5 3q0-2 2-2h8q4 0 4 4v9q0 2-1.500 2" />
        </IconButton>
        <IconButton $w={58} aria-label="Close window"><Close size={13} /></IconButton>
      </TabStrip>

      <Toolbar>
        <IconButton $w={54} aria-label="Back"><Stroke color="#9c9275" d="M19 10H1M10 1L1 10l9 9" /></IconButton>
        <IconButton $w={56} aria-label="Refresh"><Stroke sw={1.5} d="M19 10.500A9 9 0 1115.500 3L18 5.500M18.500 1v5H13" /></IconButton>
        <AddressBar>
          <Stroke w={21} h={21} color="#6d6959" sw={1.2} d="M10 .8a9.200 9.200 0 100 18.400A9.200 9.200 0 0010 .8zM10 9v5.500M10 5.700v.3" />
          <AddressInput aria-label="Address" defaultValue="localhost:8501" />
          <IconButton aria-label="Add to favorites"><Stroke color="#77725f" d={starPath} /></IconButton>
        </AddressBar>
        <IconButton aria-label="Favorites">
          <Stroke sw={1.6} d="M11.500 7L9 1.500 6.500 7 1 7.800l4.300 4L4.200 18 9 15.300M12.500 8.500H19M12.500 12.500H19M12.500 16.500H19" />
        </IconButton>
        <IconButton $w={68} aria-label="Menu">
          <svg width="18" height="4" viewBox="0 0 18 4"><circle cx="2" cy="2" r="1.700" /><circle cx="9" cy="2" r="1.700" /><circle cx="16" cy="2" r="1.700" /></svg>
        </IconButton>
        <IconButton aria-label="Copilot"><Copilot size={28} id="side" /></IconButton>
      </Toolbar>

      <FavoritesBar>
        <Favorite href="#import"><Favicon><ImportIcon /></Favicon>Import favorites</Favorite>
        <Divider />
        {favorites.map((f) => (
          <Favorite key={f.label} href="#favorite"><Favicon>{f.icon}</Favicon>{f.label}</Favorite>
        ))}
        <Spacer />
        <Divider />
        <Favorite href="#other"><Favicon><Folder /></Favicon>Other favorites</Favorite>
      </FavoritesBar>

      <PageFrame>
        <Decoration />
        <PageHeader>
          <Status>
            <svg width="16" height="4" viewBox="0 0 16 4" fill="#a3a8b8"><path d="M0 0h4v4H0zM6 0h4v4H6zM12 0h4v4h-4z" /></svg>
            CONNECTING
          </Status>
          <IconButton aria-label="Options">
            <svg width="5" height="18" viewBox="0 0 5 18" fill="#31333f"><circle cx="2.500" cy="2.500" r="2.200" /><circle cx="2.500" cy="9" r="2.200" /><circle cx="2.500" cy="15.500" r="2.200" /></svg>
          </IconButton>
        </PageHeader>
        <Main>
          <Block>
            <Columns>
              <Column><PyplotWarning /><Histogram {...ghi} /></Column>
              <Column><PyplotWarning /><Histogram {...dni} /></Column>
            </Columns>
            <Heading>Wind Rose Analysis</Heading>
          </Block>
        </Main>
        <ScrollThumb />
        <Watermark>
          <WatermarkTitle>Activate Windows</WatermarkTitle>
          <WatermarkText>Go to Settings to activate Windows.</WatermarkText>
        </Watermark>
      </PageFrame>

      <TaskBar>
        <Weather>
          <WeatherIcon />
          <div><div>59°F</div><Muted>Partly cloudy</Muted></div>
        </Weather>
        <Apps>
          <AppButton aria-label="Start"><StartIcon /></AppButton>
          <SearchBox>
            <Magnifier size={19} color="#222" width={2.2} />
            <input type="search" placeholder="Search" aria-label="Search" />
            <Medal />
          </SearchBox>
          {apps.map((a) => (
            <AppButton key={a.name} aria-label={a.name} $active={a.active} $running={a.running}>{a.icon}</AppButton>
          ))}
        </Apps>
        <Tray>
          <IconButton aria-label="Hidden icons"><Stroke w={14} h={8} box="0 0 14 8" sw={1.8} d="M1 7l6-6 6 6" /></IconButton>
          <IconButton aria-label="Sync"><Sync /></IconButton>
          <IconButton aria-label="Cloud storage"><CloudOff /></IconButton>
          <IconButton aria-label="Network"><Wifi /></IconButton>
          <IconButton $w={20} aria-label="Volume"><Volume /></IconButton>
          <IconButton aria-label="Battery"><Battery /></IconButton>
          <Clock>11:50 AM<br />12/10/2024</Clock>
          <Bell />
        </Tray>
      </TaskBar>
    </Desktop>
  );
}
